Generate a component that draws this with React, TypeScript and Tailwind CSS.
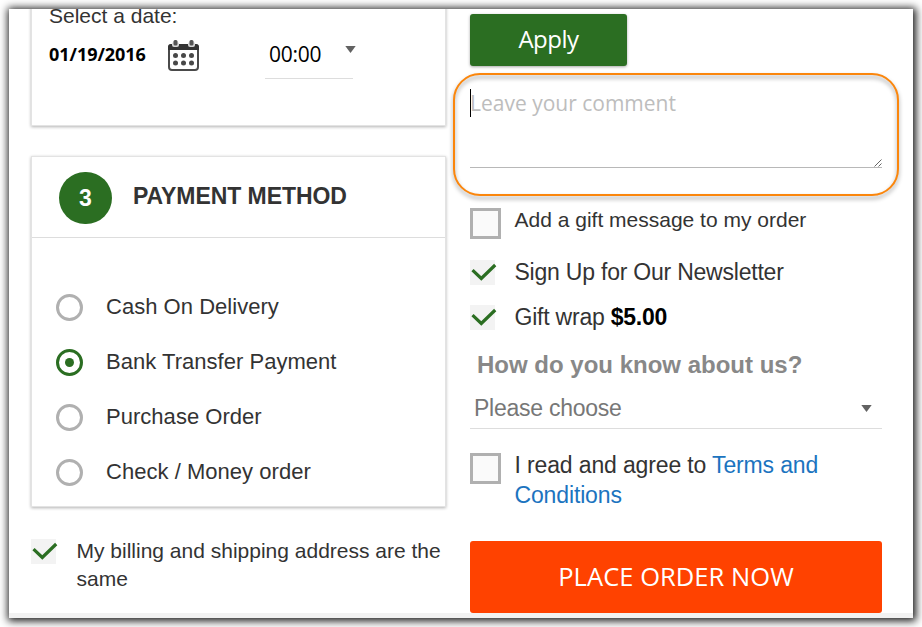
import type { ReactNode } from "react";

const arial = "font-['Liberation_Sans',Arial,sans-serif]";
const open = "font-['Open_Sans',sans-serif]";

function Tick() {
  return (
    <svg viewBox="0 0 27 25" className="block h-[25px] w-[27px] shrink-0">
      <rect width="25" height="25" fill="#f3f3f3" />
      <path d="M2.5 10.2 L11.3 18.5 L25.2 5" fill="none" stroke="#2b6e22" strokeWidth="3.2" />
    </svg>
  );
}

function EmptyBox() {
  return <span className="block h-[31px] w-[31px] shrink-0 border-[3px] border-[#b0b0b0] bg-[#fafafa]" />;
}

function Caret() {
  return (
    <svg viewBox="0 0 11 7" className="block h-[7px] w-[11px] shrink-0">
      <path d="M0.3 0 H10.7 L5.5 7 Z" fill="#626262" />
    </svg>
  );
}

function Calendar() {
  return (
    <svg viewBox="0 0 31 31" className="block h-[31px] w-[31px] shrink-0">
      <rect x="1" y="5" width="29" height="25" rx="3" fill="#fff" stroke="#4a4a4a" strokeWidth="2" />
      <path d="M0 10 V7 Q0 4 3 4 H28 Q31 4 31 7 V10 Z" fill="#333" />
      {[7.5, 23.5].map((x) => (
        <g key={x}>
          <rect x={x - 3.5} y="2" width="7" height="5" rx="2" fill="#d8d8d8" />
          <rect x={x - 2} y="0" width="4" height="5.5" rx="1.5" fill="#555" />
        </g>
      ))}
      {[15.5, 23].map((y) =>
        [7.5, 15.5, 23.5].map((x) => <circle key={`${x}-${y}`} cx={x} cy={y} r="2.5" fill="#484848" />)
      )}
    </svg>
  );
}

function Radio({ label, on = false }: { label: string; on?: boolean }) {
  return (
    <label className="flex h-[55px] items-center">
      <span
        className={`flex h-[27px] w-[27px] items-center justify-center rounded-full border-[3px] ${
          on ? "border-[#2b6e22]" : "border-[#b0b0b0]"
        }`}
      >
        {on && <span className="h-[9px] w-[9px] rounded-full bg-[#2b6e22]" />}
      </span>
      <span className="ml-[23px] pb-[2px] text-[22px] leading-[28px] tracking-[0.03px]">{label}</span>
    </label>
  );
}

function Card({ className, children }: { className: string; children: ReactNode }) {
  return (
    <section className={`w-[415px] border border-[#e3e3e3] bg-white shadow-[0_1px_3px_rgba(0,0,0,0.3)] ${className}`}>
      {children}
    </section>
  );
}

export default function App() {
  return (
    <div className={`h-[627px] w-[922px] overflow-hidden bg-white p-[9px] text-[#333] ${arial}`}>
      <div className="h-[609px] w-[904px] shadow-[1px_1px_8px_2px_rgba(0,0,0,0.9)]">
        <div className="relative flex h-[609px] w-[904px] overflow-hidden border-b-[5px] border-[#f2f2f2] bg-white">
          <div className="ml-[22px] w-[415px]">
            <Card className="-mt-[10px] h-[127px] pl-[17px]">
              <div className="mt-[2px] text-[21px] leading-[28px]">Select a date:</div>
              <div className="flex">
                <span className={`mt-[10px] w-[119px] text-[18px] leading-[28px] font-bold tracking-[-0.04px] text-black ${open}`}>
                  01/19/2016
                </span>
                <span className="mt-[10px]">
                  <Calendar />
                </span>
                <div className="ml-[66px] flex h-[49px] w-[88px] border-b border-[#ddd] pl-[4px]">
                  <span className={`mt-[9px] w-[76px] shrink-0 text-[21px] leading-[30px] tracking-[-0.25px] text-black ${open}`}>
                    00:00
                  </span>
                  <span className="mt-[16px]">
                    <Caret />
                  </span>
                </div>
              </div>
            </Card>

            <Card className="mt-[30px] h-[351px]">
              <header className="flex h-[81px] border-b border-[#ddd] pl-[27px]">
                <span className="mt-[15px] flex h-[52px] w-[53px] items-center justify-center rounded-full bg-[#2b6e22] text-[23px] font-bold text-white">
                  3
                </span>
                <h2 className="mt-[25px] ml-[21px] text-[23px] leading-[28px] font-bold tracking-[-0.06px]">PAYMENT METHOD</h2>
              </header>
              <div className="pt-[42px] pl-[24px]">
                <Radio label="Cash On Delivery" />
                <Radio label="Bank Transfer Payment" on />
                <Radio label="Purchase Order" />
                <Radio label="Check / Money order" />
              </div>
            </Card>

            <label className="mt-[30px] flex">
              <span className="mt-[2px]">
                <Tick />
              </span>
              <span className="ml-[18.5px] w-[372px] shrink-0 text-[21px] leading-[28px]">
                My billing and shipping address are the
                <br />
                same
              </span>
            </label>
          </div>

          <div className="ml-[24px] w-[412px]">
            <button
              className={`mt-[5px] block h-[52px] w-[157px] rounded-[3px] bg-[#2b6e22] pb-[2px] text-[24px] leading-[48px] tracking-[-0.5px] text-white shadow-[0_1px_3px_rgba(0,0,0,0.35)] ${open}`}
            >
              Apply
            </button>

            <div className="relative mt-[22px] flex h-[80px] border-b border-[#b8b8b8]">
              <span className="mt-px h-[28px] w-px bg-black" />
              <span className={`-ml-px text-[21px] leading-[30px] text-[#bdbdbd] ${open}`}>Leave your comment</span>
              <svg viewBox="0 0 8 8" className="absolute right-0 bottom-0 h-[8px] w-[8px]">
                <path d="M0.5 7.5 L7.5 0.5 M4.5 7.5 L7.5 4.5" stroke="#555" strokeWidth="0.9" />
              </svg>
              <div className="absolute -top-[15.5px] -left-[17px] h-[123px] w-[445.5px] rounded-[27px] border-2 border-[#fb860c] drop-shadow-[0_3px_2px_rgba(0,0,0,0.4)]" />
            </div>

            <label className="mt-[38px] flex">
              <span className="mt-[2px]">
                <EmptyBox />
              </span>
              <span className="ml-[13.5px] text-[21px] leading-[28px] whitespace-nowrap">
                Add a gift message to my order
              </span>
            </label>
            <label className="mt-[18px] flex h-[30px]">
              <span className="mt-[3px]">
                <Tick />
              </span>
              <span className="ml-[17.5px] text-[23px] leading-[30px] tracking-[-0.22px] whitespace-nowrap">
                Sign Up for Our Newsletter
              </span>
            </label>
            <label className="mt-[15px] flex h-[30px]">
              <span className="mt-[3px]">
                <Tick />
              </span>
              <span className="ml-[17.5px] text-[23px] leading-[30px] tracking-[-0.22px] whitespace-nowrap">
                Gift wrap <b className="text-black">$5.00</b>
              </span>
            </label>

            <div className="mt-[18px] pl-[7px] text-[24px] leading-[30px] font-bold whitespace-nowrap text-[#888]">
              How do you know about us?
            </div>
            <div className="mt-[13px] flex h-[36px] justify-between border-b border-[#ddd] pr-[10px] pl-[4px] text-[23px] leading-[30px] tracking-[-0.25px] text-[#777]">
              Please choose
              <span className="mt-[12px]">
                <Caret />
              </span>
            </div>

            <label className="mt-[21px] flex">
              <span className="mt-[3px]">
                <EmptyBox />
              </span>
              <span className="ml-[13.5px] text-[23px] leading-[30px] tracking-[-0.14px] whitespace-nowrap">
                I read and agree to <a className="text-[#1c74bf]">Terms and</a>
                <br />
                <a className="text-[#1c74bf]">Conditions</a>
              </span>
            </label>

            <button
              className={`mt-[31px] block h-[72px] w-[412px] rounded-[3px] bg-[#ff4200] pb-[2px] text-[25.5px] leading-[70px] tracking-[0.05px] text-white ${open}`}
            >
              PLACE ORDER NOW
            </button>
          </div>
        </div>
      </div>
    </div>
  );
}
